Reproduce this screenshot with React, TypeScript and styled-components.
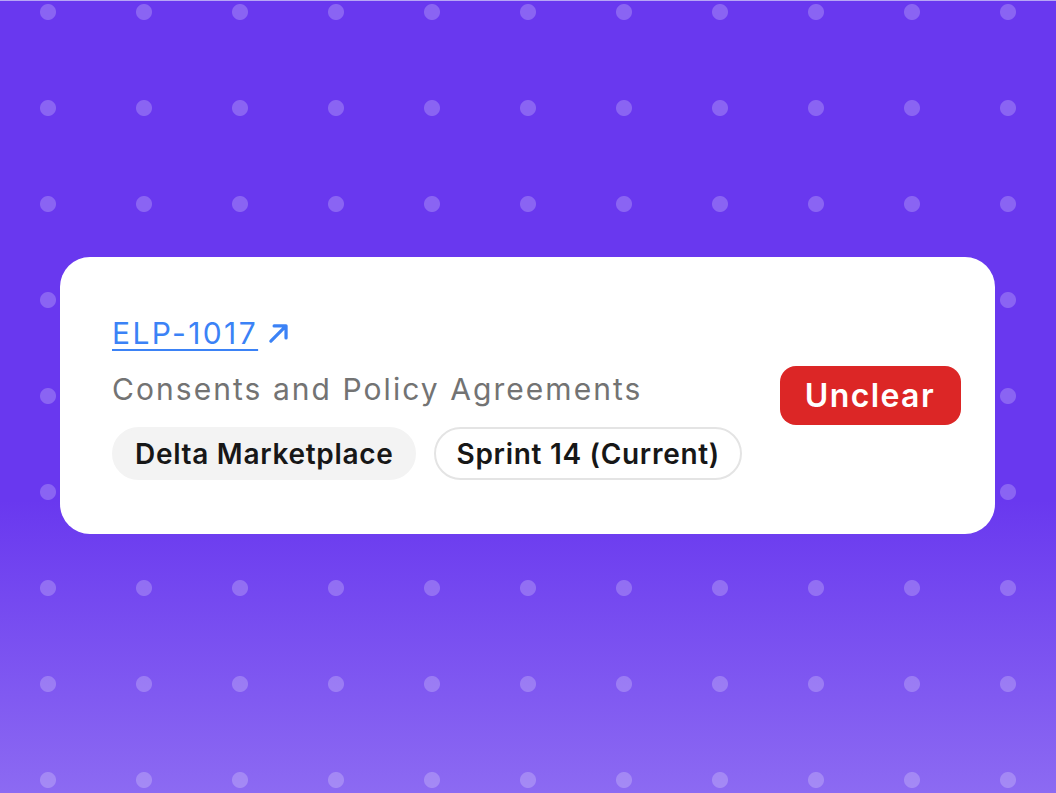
import React from "react";
import styled, { createGlobalStyle } from "styled-components";

const GlobalStyle = createGlobalStyle`
  html, body {
    margin: 0;
    padding: 0;
  }
  body {
    font-family: Inter, "Noto Sans", sans-serif;
  }
`;

const Stage = styled.div`
  box-sizing: border-box;
  width: 1056px;
  height: 793px;
  display: flex;
  align-items: center;
  justify-content: center;
  border-top: 1px solid #b7a6f5;
  background-color: #6938ef;
  background-image:
    radial-gradient(circle, rgba(255, 255, 255, 0.22) 7.5px, transparent 8.5px),
    linear-gradient(180deg, #6938ef 0%, #6938ef 63%, #8c6af2 100%);
  background-size: 96px 96px, 100% 100%;
  background-position: 0 -37px, 0 0;
`;

const Card = styled.div`
  box-sizing: border-box;
  width: 935px;
  height: 277px;
  margin: -3px 1px 0 0;
  background: #ffffff;
  border-radius: 30px;
  display: flex;
  align-items: center;
  justify-content: space-between;
  padding: 0 34px 0 52px;
`;

const Info = styled.div`
  display: flex;
  flex-direction: column;
  margin-top: 4px;
`;

const TicketLink = styled.a`
  display: inline-flex;
  align-items: center;
  gap: 8px;
  color: #3b82f6;
  font-size: 30px;
  line-height: 36px;
  letter-spacing: 2.4px;
  text-decoration: none;
  cursor: pointer;
`;

const TicketId = styled.span`
  text-decoration: underline;
  text-decoration-thickness: 2px;
  text-underline-offset: 5px;
`;

const Title = styled.div`
  margin-top: 20px;
  color: #737373;
  font-size: 30px;
  line-height: 36px;
  letter-spacing: 2.05px;
`;

const Tags = styled.div`
  display: flex;
  gap: 18px;
  margin-top: 20px;
`;

const Tag = styled.span<{ $outlined?: boolean }>`
  box-sizing: border-box;
  height: 53px;
  display: inline-flex;
  align-items: center;
  padding: 0 20px 0 21px;
  border-radius: 27px;
  font-size: 28px;
  font-weight: 600;
  letter-spacing: 0.7px;
  color: #171717;
  background: ${(p) => (p.$outlined ? "#ffffff" : "#f3f3f3")};
  border: 2px solid ${(p) => (p.$outlined ? "#e4e4e4" : "#f3f3f3")};
`;

const Status = styled.span`
  box-sizing: border-box;
  height: 59px;
  display: inline-flex;
  align-items: center;
  padding: 0 26px 0 25px;
  border-radius: 16px;
  background: #dc2626;
  color: #ffffff;
  font-size: 32px;
  font-weight: 600;
  letter-spacing: 1.4px;
`;

const ArrowIcon = () => (
  <svg width="26" height="26" viewBox="0 0 24 24" fill="none">
    <path
      d="M4.5 19.5L18.5 5.5M7.5 5.5h11v11"
      stroke="#3b82f6"
      strokeWidth="3"
      strokeLinecap="round"
      strokeLinejoin="round"
    />
  </svg>
);

export default function App() {
  return (
    <>
      <GlobalStyle />
      <Stage>
        <Card>
          <Info>
            <div>
              <TicketLink>
                <TicketId>ELP-1017</TicketId>
                <ArrowIcon />
              </TicketLink>
            </div>
            <Title>Consents and Policy Agreements</Title>
            <Tags>
              <Tag>Delta Marketplace</Tag>
              <Tag $outlined>Sprint 14 (Current)</Tag>
            </Tags>
          </Info>
          <Status>Unclear</Status>
        </Card>
      </Stage>
    </>
  );
}
